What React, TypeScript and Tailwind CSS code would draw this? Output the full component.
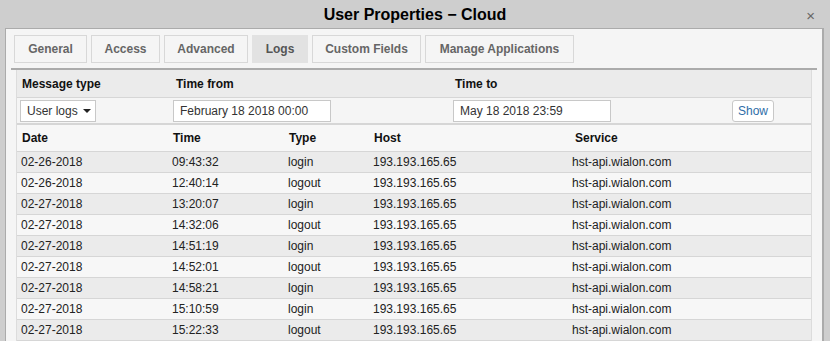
const tabs: [string, string][] = [
  ["General", "w-[73px]"],
  ["Access", "w-[69px]"],
  ["Advanced", "w-[84px]"],
  ["Logs", "w-[56px]"],
  ["Custom Fields", "w-[109px]"],
  ["Manage Applications", "w-[149px]"],
];

const rows = [
  ["02-26-2018", "09:43:32", "login"],
  ["02-26-2018", "12:40:14", "logout"],
  ["02-27-2018", "13:20:07", "login"],
  ["02-27-2018", "14:32:06", "logout"],
  ["02-27-2018", "14:51:19", "login"],
  ["02-27-2018", "14:52:01", "logout"],
  ["02-27-2018", "14:58:21", "login"],
  ["02-27-2018", "15:10:59", "login"],
  ["02-27-2018", "15:22:33", "logout"],
];

const cols = "grid grid-cols-[150px_116px_85px_199px_1fr]";

export default function App() {
  return (
    <div className="w-[830px] h-[341px] overflow-hidden bg-[#cecece] font-['Liberation_Sans',Arial,sans-serif] text-[12px] text-[#222]">
      <div className="relative h-[28px] flex items-center justify-center">
        <h1 className="text-[16px] font-bold text-black pt-[1px]">User Properties − Cloud</h1>
        <span className="absolute right-[15px] top-[5px] text-[15px] text-[#666]">×</span>
      </div>

      <div className="ml-[5px] w-[819px] h-[313px] bg-[#f5f5f5] border-t border-l border-r-2 border-[#ababab]">
        <div className="flex gap-[4px] pl-[8px] pt-[6px]">
          {tabs.map(([t, w]) => (
            <div
              key={t}
              className={
                t === "Logs"
                  ? `${w} h-[28px] flex items-center justify-center bg-[#e2e2e2] border border-[#e2e2e2] font-bold text-[#555]`
                  : `${w} h-[28px] flex items-center justify-center bg-[#f5f5f5] border border-[#d8d8d8] font-bold text-[#666]`
              }
            >
              {t}
            </div>
          ))}
        </div>

        <div className="mt-[5px] mx-[5px] border-t-2 border-[#ababab] pl-[5px] pr-[5px]">
          <div className="border-l border-r border-[#dcdcdc]">
            <div className="grid grid-cols-[154px_280px_1fr] h-[28px] items-center bg-[#ebebeb] border-b border-[#d6d6d6] font-bold text-[#111]">
              <span className="pl-[5px]">Message type</span>
              <span className="pl-[5px]">Time from</span>
              <span className="pl-[4px]">Time to</span>
            </div>

            <div className="grid grid-cols-[154px_280px_1fr] h-[27px] items-center bg-[#f5f5f5] border-b-2 border-[#d6d6d6]">
              <div className="pl-[3px]">
                <div className="w-[76px] h-[22px] bg-white border border-[#c8c8c8] flex items-center pl-[6px] gap-[5px] text-[#333]">
                  User logs
                  <span className="w-0 h-0 border-l-[4px] border-r-[4px] border-t-[4px] border-l-transparent border-r-transparent border-t-[#222]" />
                </div>
              </div>
              <div className="pl-[2px]">
                <div className="w-[158px] h-[22px] bg-white border border-[#c8c8c8] flex items-center pl-[6px] text-[#333]">
                  February 18 2018 00:00
                </div>
              </div>
              <div className="pl-[2px] flex items-center justify-between pr-[37px]">
                <div className="w-[158px] h-[22px] bg-white border border-[#c8c8c8] flex items-center pl-[6px] text-[#333]">
                  May 18 2018 23:59
                </div>
                <button className="h-[22px] w-[42px] bg-white border border-[#c8c8c8] rounded-[3px] text-[#2f6da8]">
                  Show
                </button>
              </div>
            </div>

            <div className={`${cols} h-[27px] items-center bg-[#f7f7f7] border-b border-[#d6d6d6] font-bold text-[#111]`}>
              <span className="pl-[5px]">Date</span>
              <span className="pl-[6px]">Time</span>
              <span className="pl-[6px]">Type</span>
              <span className="pl-[6px]">Host</span>
              <span className="pl-[8px]">Service</span>
            </div>

            {rows.map((r, i) => (
              <div
                key={i}
                className={`${cols} h-[21px] items-center border-b border-[#d6d6d6] ${i % 2 === 0 ? "bg-[#ebebeb]" : "bg-[#f7f7f7]"}`}
              >
                <span className="pl-[4px]">{r[0]}</span>
                <span className="pl-[5px]">{r[1]}</span>
                <span className="pl-[5px]">{r[2]}</span>
                <span className="pl-[5px]">193.193.165.65</span>
                <span className="pl-[5px]">hst-api.wialon.com</span>
              </div>
            ))}
          </div>
        </div>
      </div>
    </div>
  );
}
